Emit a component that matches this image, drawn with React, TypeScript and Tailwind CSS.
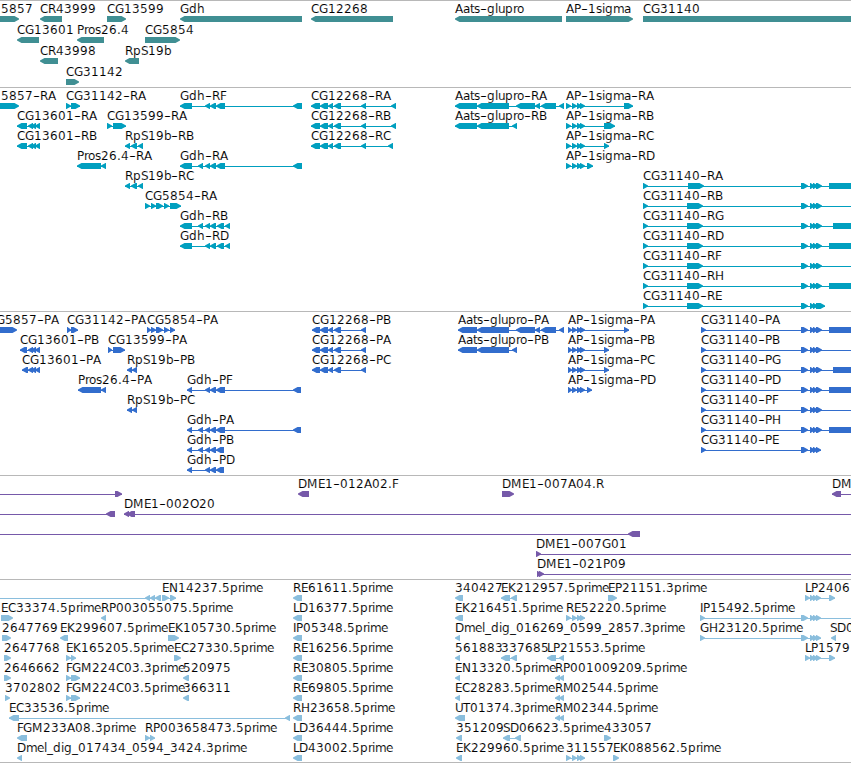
type Exon = [number, number];
type Dir = 'L' | 'R';
type Feature = { label: string; x: number; dir: Dir; exons: Exon[] };

const f = (label: string, x: number, dir: Dir, ...exons: Exon[]): Feature => ({ label, x, dir, exons });

// Anything beyond the right edge of the view is clipped.
const OFF = 880;

// Pixel advances of the label glyphs.
const ADVANCE: Record<string, number> = {
  A: 8, B: 7, C: 8, D: 9, E: 7, F: 6, G: 9, H: 9, I: 3, K: 8, L: 6, M: 10.5, N: 9, O: 9, P: 7, R: 7.5, S: 7, T: 7, U: 8,
  a: 7, b: 7.5, d: 8, e: 7, g: 8, h: 8, i: 3, l: 3, m: 11, o: 7, p: 8, r: 4, s: 6, t: 4, u: 7,
  '-': 7, '_': 6, '.': 4,
};

// Splits a label at its hyphens and gives every glyph its own x.
function layoutLabel(label: string, start: number) {
  let x = start;
  return label.split(/(-)/).map((text) => {
    const xs = [...text].map((ch) => {
      const at = Math.round(x);
      x += ADVANCE[ch] ?? 8;
      return at;
    });
    return { text, xs: xs.join(' ') };
  });
}

const sigma: Exon[] = [[572, 577], [577, 582], [580, 585]];
const cgTail: Exon[] = [[801, 808], [810, 815], [813, 818], [816, 822]];
const cg12268: Exon[] = [[320, 328], [328, 333], [334, 341], [361, 366]];
const cg13601: Exon[] = [[28, 33], [31, 36], [35, 40]];
const aats: Exon[] = [[477, 509], [516, 535], [535, 540], [541, 556], [559, 564]];
const lp: Exon[] = [[805, 810], [810, 815], [813, 818], [816, 821], [829, 835]];

const genes: Feature[][] = [
  [
    f('5857', 1, 'R', [-16, 19]),
    f('CR43999', 40, 'L', [40, 62]),
    f('CG13599', 107, 'R', [107, 126]),
    f('Gdh', 180, 'L', [180, 302]),
    f('CG12268', 311, 'L', [311, 393]),
    f('Aats-glupro', 455, 'L', [455, 562]),
    f('AP-1sigma', 566, 'R', [566, 633]),
    f('CG31140', 643, 'R', [643, OFF]),
  ],
  [f('CG13601', 17, 'L', [17, 39]), f('Pros26.4', 77, 'L', [77, 104]), f('CG5854', 145, 'R', [145, 180])],
  [f('CR43998', 40, 'L', [40, 58]), f('RpS19b', 125, 'L', [125, 139])],
  [f('CG31142', 66, 'R', [66, 79])],
];

const transcripts: Feature[][] = [
  [
    f('5857-RA', 1, 'R', [-16, 19]),
    f('CG31142-RA', 66, 'R', [66, 71], [71, 80]),
    f('Gdh-RF', 180, 'L', [180, 192], [205, 210], [210, 216], [216, 225], [293, 302]),
    f('CG12268-RA', 311, 'L', [311, 320], ...cg12268, [391, 396]),
    f('Aats-glupro-RA', 455, 'L', [455, 477], ...aats),
    f('AP-1sigma-RA', 566, 'R', [566, 571], ...sigma, [624, 633]),
  ],
  [
    f('CG13601-RA', 17, 'L', [17, 27], ...cg13601),
    f('CG13599-RA', 107, 'R', [107, 112], [113, 126]),
    f('CG12268-RB', 311, 'L', [311, 320], ...cg12268, [391, 396]),
    f('Aats-glupro-RB', 455, 'L', [455, 477], [477, 509], [512, 517]),
    f('AP-1sigma-RB', 566, 'R', [566, 571], ...sigma, [604, 615]),
  ],
  [
    f('CG13601-RB', 17, 'L', [17, 27], ...cg13601),
    f('RpS19b-RB', 125, 'L', [125, 130], [131, 137], [138, 143]),
    f('CG12268-RC', 311, 'L', [311, 320], ...cg12268, [388, 393]),
    f('AP-1sigma-RC', 566, 'R', [566, 571], ...sigma, [604, 609]),
  ],
  [
    f('Pros26.4-RA', 77, 'L', [77, 101], [101, 106]),
    f('Gdh-RA', 180, 'L', [180, 192], [198, 203], [205, 210], [210, 216], [216, 225], [293, 302]),
    f('AP-1sigma-RD', 566, 'R', [566, 571], ...sigma, [587, 593]),
  ],
  [
    f('RpS19b-RC', 125, 'L', [125, 130], [131, 137], [138, 143]),
    f('CG31140-RA', 643, 'R', [643, 648], [688, 704], ...cgTail, [829, OFF]),
  ],
  [
    f('CG5854-RA', 145, 'R', [145, 150], [151, 156], [156, 163], [164, 169], [170, 181]),
    f('CG31140-RB', 643, 'R', [643, 648], [687, 703], ...cgTail, [870, OFF]),
  ],
  [
    f('Gdh-RB', 180, 'L', [180, 192], [198, 203], [205, 210], [210, 216], [217, 224], [225, 230]),
    f('CG31140-RG', 643, 'R', [643, 648], [687, 703], ...cgTail, [833, OFF]),
  ],
  [
    f('Gdh-RD', 180, 'L', [180, 192], [205, 210], [210, 216], [217, 224], [225, 230]),
    f('CG31140-RD', 643, 'R', [643, 648], [687, 703], ...cgTail, [829, OFF]),
  ],
  [f('CG31140-RF', 643, 'R', [643, 648], [687, 703], ...cgTail, [870, OFF])],
  [f('CG31140-RH', 643, 'R', [643, 648], [687, 703], ...cgTail, [829, OFF])],
  [f('CG31140-RE', 643, 'R', [643, 648], [687, 703], [801, 808], [810, 815], [813, 818], [816, 825])],
];

const proteins: Feature[][] = [
  [
    f('G5857-PA', -4, 'R', [-12, 17]),
    f('CG31142-PA', 67, 'R', [67, 71], [71, 78]),
    f('CG5854-PA', 147, 'R', [147, 151], [151, 156], [156, 163], [164, 169], [170, 175]),
    f('CG12268-PB', 312, 'L', [312, 320], ...cg12268),
    f('Aats-glupro-PA', 458, 'L', [458, 477], ...aats),
    f('AP-1sigma-PA', 568, 'R', [568, 572], ...sigma, [624, 629]),
    f('CG31140-PA', 701, 'R', [701, 706], ...cgTail, [829, OFF]),
  ],
  [
    f('CG13601-PB', 20, 'L', [20, 27], ...cg13601),
    f('CG13599-PA', 108, 'R', [108, 112], [113, 125]),
    f('CG12268-PA', 312, 'L', [312, 320], ...cg12268),
    f('Aats-glupro-PB', 458, 'L', [458, 477], [477, 509], [512, 517]),
    f('AP-1sigma-PB', 568, 'R', [568, 572], ...sigma, [604, 609]),
    f('CG31140-PB', 701, 'R', [701, 706], ...cgTail, [870, OFF]),
  ],
  [
    f('CG13601-PA', 22, 'L', [22, 28], ...cg13601),
    f('RpS19b-PB', 127, 'L', [127, 132], [132, 137]),
    f('CG12268-PC', 312, 'L', [312, 320], ...cg12268),
    f('AP-1sigma-PC', 568, 'R', [568, 572], ...sigma, [604, 609]),
    f('CG31140-PG', 701, 'R', [701, 706], ...cgTail, [833, OFF]),
  ],
  [
    f('Pros26.4-PA', 78, 'L', [78, 101], [101, 106]),
    f('Gdh-PF', 187, 'L', [187, 192], [205, 210], [210, 216], [216, 225], [293, 301]),
    f('AP-1sigma-PD', 568, 'R', [568, 572], ...sigma, [587, 592]),
    f('CG31140-PD', 701, 'R', [701, 706], ...cgTail, [829, OFF]),
  ],
  [
    f('RpS19b-PC', 127, 'L', [127, 132], [132, 137]),
    f('CG31140-PF', 701, 'R', [701, 706], ...cgTail, [870, OFF]),
  ],
  [
    f('Gdh-PA', 187, 'L', [187, 192], [198, 203], [205, 210], [210, 216], [216, 225], [293, 301]),
    f('CG31140-PH', 701, 'R', [701, 706], ...cgTail, [829, OFF]),
  ],
  [
    f('Gdh-PB', 187, 'L', [187, 192], [198, 203], [205, 210], [210, 216], [216, 224]),
    f('CG31140-PE', 701, 'R', [701, 706], [801, 808], [810, 815], [813, 818], [816, 821]),
  ],
  [f('Gdh-PD', 187, 'L', [187, 192], [205, 210], [210, 216], [216, 224])],
];

const clones: Feature[][] = [
  [
    f('', -10, 'R', [-20, -10], [115, 122]),
    f('DME1-012A02.F', 298, 'L', [298, 309]),
    f('DME1-007A04.R', 502, 'R', [502, 514]),
    f('DM', 832, 'L', [832, 841], [870, OFF]),
  ],
  [f('', -10, 'L', [-20, -10], [106, 115]), f('DME1-002O20', 124, 'L', [124, 129], [127, 135], [870, OFF])],
  [f('', -10, 'L', [-20, -10], [628, 640])],
  [f('DME1-007G01', 536, 'R', [536, 541], [870, OFF])],
  [f('DME1-021P09', 537, 'R', [537, 542], [539, 544], [870, OFF])],
];

const ests: Feature[][] = [
  [
    f('', -10, 'L', [-20, -10], [145, 150], [150, 155], [155, 161]),
    f('EN14237.5prime', 162, 'R', [162, 169], [170, 176]),
    f('RE61611.5prime', 293, 'L', [293, 302]),
    f('340427', 455, 'L', [455, 463]),
    f('EK212957.5prime', 501, 'L', [501, 510], [511, 517]),
    f('EP21151.3prime', 608, 'R', [608, 617]),
    f('LP2406', 805, 'R', ...lp),
  ],
  [
    f('EC33374.5prime', 1, 'R', [1, 13]),
    f('RP003055075.5prime', 101, 'L', [101, 106]),
    f('LD16377.5prime', 293, 'L', [293, 302]),
    f('EK216451.5prime', 455, 'L', [455, 463]),
    f('RE52220.5prime', 566, 'R', [566, 571], ...sigma),
    f('IP15492.5prime', 700, 'R', [700, 705], [801, 808], [810, 815], [813, 818], [816, 821], [870, OFF]),
  ],
  [
    f('2647769', 2, 'R', [2, 11]),
    f('EK299607.5prime', 60, 'L', [60, 68]),
    f('EK105730.5prime', 168, 'R', [168, 179]),
    f('IP05348.5prime', 293, 'L', [293, 302]),
    f('Dmel_dig_016269_0599_2857.3prime', 455, 'L', [455, 460]),
    f('GH23120.5prime', 700, 'R', [700, 705], [801, 808], [810, 815], [813, 818], [816, 821]),
    f('SD0', 830, 'L', [831, 836]),
  ],
  [
    f('2647768', 4, 'R', [4, 11]),
    f('EK165205.5prime', 66, 'R', [66, 71], [71, 76]),
    f('EC27330.5prime', 174, 'R', [174, 181]),
    f('RE16256.5prime', 293, 'L', [293, 302]),
    f('561883', 455, 'L', [455, 460]),
    f('337685', 501, 'L', [501, 510], [511, 517]),
    f('LP21553.5prime', 547, 'L', [547, 556], [559, 564]),
    f('LP1579', 805, 'R', ...lp),
  ],
  [
    f('2646662', 4, 'R', [4, 11]),
    f('FGM224C03.3prime', 66, 'R', [66, 71], [71, 80]),
    f('520975', 183, 'L', [183, 189]),
    f('RE30805.5prime', 293, 'L', [293, 302]),
    f('EN13320.5prime', 455, 'L', [455, 460]),
    f('RP001009209.5prime', 555, 'L', [555, 560], [559, 564]),
  ],
  [
    f('3702802', 5, 'R', [5, 10]),
    f('FGM224C03.5prime', 66, 'R', [66, 71], [71, 80]),
    f('366311', 183, 'L', [183, 189]),
    f('RE69805.5prime', 293, 'L', [293, 302]),
    f('EC28283.5prime', 455, 'L', [455, 460]),
    f('RM02544.5prime', 555, 'L', [555, 560], [559, 564]),
  ],
  [
    f('EC33536.5prime', 9, 'L', [9, 19], [285, 290]),
    f('RH23658.5prime', 293, 'L', [293, 302]),
    f('UT01374.3prime', 455, 'L', [455, 465]),
    f('RM02344.5prime', 555, 'L', [555, 560], [559, 564]),
  ],
  [
    f('FGM233A08.3prime', 17, 'L', [17, 27]),
    f('RP003658473.5prime', 145, 'R', [145, 150], [150, 155]),
    f('LD36444.5prime', 293, 'L', [293, 302]),
    f('351209', 456, 'L', [456, 462]),
    f('SD06623.5prime', 503, 'L', [503, 510], [515, 521]),
    f('433057', 604, 'R', [604, 611]),
  ],
  [
    f('Dmel_dig_017434_0594_3424.3prime', 17, 'L', [17, 22]),
    f('LD43002.5prime', 293, 'L', [293, 302]),
    f('EK229960.5prime', 456, 'L', [456, 462]),
    f('311557', 566, 'R', [566, 571], ...sigma),
    f('EK088562.5prime', 613, 'R', [613, 619]),
  ],
];

function arrow([a, b]: Exon, dir: Dir) {
  const head = Math.min(5, b - a);
  return dir === 'R'
    ? `${a},15 ${b - head + 0.5},15 ${b},17.5 ${b},18.5 ${b - head + 0.5},21 ${a},21`
    : `${b},15 ${a + head - 0.5},15 ${a},17.5 ${a},18.5 ${a + head - 0.5},21 ${b},21`;
}

function Glyph({ feature }: { feature: Feature }) {
  const { label, x, dir, exons } = feature;
  const start = exons[0][0];
  const end = exons[exons.length - 1][1];
  return (
    <g>
      {exons.length > 1 && <rect x={start} y={18} width={end - start} height={1} />}
      {exons.map((exon, i) => (
        <polygon key={i} points={arrow(exon, dir)} />
      ))}
      {label && (
        <text y={12} className="fill-black stroke-white stroke-[0.1px]">
          {layoutLabel(label, x).map(({ text, xs }, i) =>
            text === '-' ? (
              <tspan key={i} x={xs} textLength={7} lengthAdjust="spacingAndGlyphs">
                -
              </tspan>
            ) : (
              <tspan key={i} x={xs}>
                {text}
              </tspan>
            ),
          )}
        </text>
      )}
    </g>
  );
}

function Track({ rows, rowClass, className }: { rows: Feature[][]; rowClass: string; className: string }) {
  return (
    <section className={`flex flex-col border-t border-[#b8b8b8] ${className}`}>
      {rows.map((row, i) => (
        <svg key={i} className={`block w-full shrink-0 overflow-visible fill-current ${rowClass}`}>
          {row.map((feature, j) => (
            <Glyph key={j} feature={feature} />
          ))}
        </svg>
      ))}
    </section>
  );
}

export default function App() {
  return (
    <main className="flex h-[763px] w-[851px] flex-col overflow-hidden bg-white font-['DejaVu_Sans',sans-serif] text-[12px]">
      <Track rows={genes} rowClass="h-[21px]" className="pb-0.5 text-[#408f93]" />
      <Track rows={transcripts} rowClass="h-5" className="pb-[3px] text-[#009fbf]" />
      <Track rows={proteins} rowClass="h-5" className="pb-[3px] text-[#326dcd]" />
      <Track rows={clones} rowClass="h-5" className="pb-[3px] text-[#7659a9]" />
      <Track rows={ests} rowClass="h-5" className="border-b pb-0.5 text-[#8abedd]" />
    </main>
  );
}
